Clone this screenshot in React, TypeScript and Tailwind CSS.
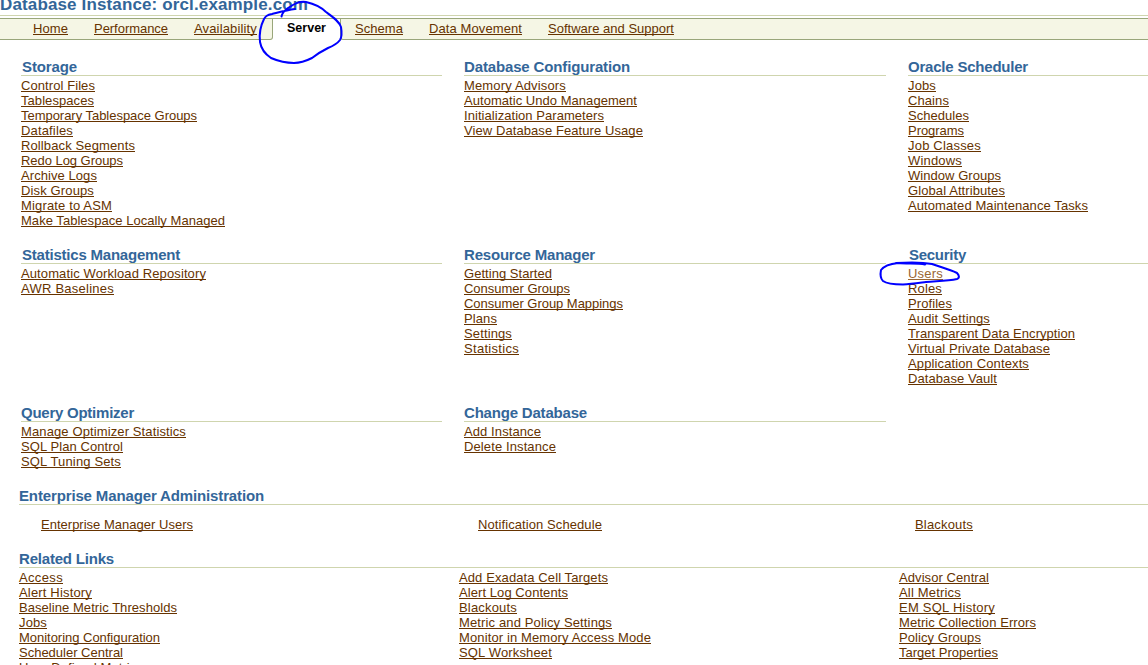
type Link = [label: string, width: number];

const storage: Link[] = [
  ['Control Files', 74], ['Tablespaces', 73], ['Temporary Tablespace Groups', 176], ['Datafiles', 52],
  ['Rollback Segments', 114], ['Redo Log Groups', 102], ['Archive Logs', 76], ['Disk Groups', 73],
  ['Migrate to ASM', 91], ['Make Tablespace Locally Managed', 204],
];
const configuration: Link[] = [
  ['Memory Advisors', 102], ['Automatic Undo Management', 173], ['Initialization Parameters', 140],
  ['View Database Feature Usage', 179],
];
const scheduler: Link[] = [
  ['Jobs', 28], ['Chains', 41], ['Schedules', 61], ['Programs', 56], ['Job Classes', 73], ['Windows', 54],
  ['Window Groups', 93], ['Global Attributes', 97], ['Automated Maintenance Tasks', 180],
];
const statistics: Link[] = [['Automatic Workload Repository', 185], ['AWR Baselines', 93]];
const resources: Link[] = [
  ['Getting Started', 88], ['Consumer Groups', 106], ['Consumer Group Mappings', 159], ['Plans', 33],
  ['Settings', 48], ['Statistics', 55],
];
const security: Link[] = [
  ['Users', 35], ['Roles', 34], ['Profiles', 44], ['Audit Settings', 82], ['Transparent Data Encryption', 167],
  ['Virtual Private Database', 142], ['Application Contexts', 121], ['Database Vault', 89],
];
const optimizer: Link[] = [['Manage Optimizer Statistics', 165], ['SQL Plan Control', 102], ['SQL Tuning Sets', 100]];
const change: Link[] = [['Add Instance', 77], ['Delete Instance', 92]];
const related: Link[][] = [
  [['Access', 44], ['Alert History', 73], ['Baseline Metric Thresholds', 158], ['Jobs', 28],
    ['Monitoring Configuration', 141], ['Scheduler Central', 104], ['User-Defined Metrics', 124]],
  [['Add Exadata Cell Targets', 149], ['Alert Log Contents', 109], ['Blackouts', 58],
    ['Metric and Policy Settings', 153], ['Monitor in Memory Access Mode', 192], ['SQL Worksheet', 93]],
  [['Advisor Central', 90], ['All Metrics', 62], ['EM SQL History', 96], ['Metric Collection Errors', 137],
    ['Policy Groups', 82], ['Target Properties', 99]],
];

function FitText({ text, width }: { text: string; width: number }) {
  return (
    <span
      className="block whitespace-nowrap"
      ref={(el) => {
        if (!el) return;
        el.style.width = 'max-content';
        el.style.letterSpacing = '0px';
        const natural = el.getBoundingClientRect().width;
        el.style.letterSpacing = `${(width - natural) / text.length}px`;
        el.style.width = `${width}px`;
      }}
    >
      {text}
    </span>
  );
}

function A({ link, muted = false }: { link: Link; muted?: boolean }) {
  return (
    <a
      className={`block w-fit text-[13px] leading-[15px] underline decoration-1 underline-offset-1 [text-decoration-skip-ink:none] ${
        muted ? 'text-[#996633]' : 'text-[#663300]'
      }`}
    >
      <FitText text={link[0]} width={link[1]} />
    </a>
  );
}

function Heading({ title, width }: { title: string; width: number }) {
  return (
    <h2
      className={`h-[18px] border-b border-[#cfd5ae] text-[15px] leading-[17px] font-bold text-[#336699] ${
        title.startsWith('S') ? 'pl-px' : ''
      }`}
    >
      <FitText text={title} width={width} />
    </h2>
  );
}

function Section({ title, width, links }: { title: string; width: number; links: Link[] }) {
  return (
    <section>
      <Heading title={title} width={width} />
      <div className="pt-[2px]">
        {links.map((l) => <A key={l[0]} link={l} muted={l[0] === 'Users'} />)}
      </div>
    </section>
  );
}

export default function App() {
  return (
    <div className="relative h-[665px] w-[1148px] overflow-hidden bg-white font-['Liberation_Sans',Arial,sans-serif]">
      <header className="flex h-4 items-end border-b border-[#cfd5ae]">
        <h1 className="h-5 text-[17px] leading-5 font-bold text-[#336699]">
          <FitText text="Database Instance: orcl.example.com" width={308} />
        </h1>
      </header>
      <nav className="mt-[2px] flex h-[22px]">
        <div className="flex w-[273px] gap-[26px] rounded-br-[3px] border-y border-r border-[#99a67a] bg-[#f5f6e5] pt-[2px] pl-[33px]">
          <A link={['Home', 35]} />
          <A link={['Performance', 74]} />
          <A link={['Availability', 63]} />
        </div>
        <div className="w-[67px] border-t border-[#99a67a] pt-[2px] pl-[14px] text-[12.5px] leading-[15px] font-bold text-black">
          <FitText text="Server" width={39} />
        </div>
        <div className="flex flex-1 gap-[26px] rounded-bl-[3px] border-y border-l border-[#99a67a] bg-[#f5f6e5] pt-[2px] pl-[14px]">
          <A link={['Schema', 48]} />
          <A link={['Data Movement', 93]} />
          <A link={['Software and Support', 126]} />
        </div>
      </nav>
      <main>
        <div className="grid grid-cols-[421px_422px_240px] grid-rows-[188px_158px_83px] gap-x-[22px] pt-[18px] pl-[21px]">
          <Section title="Storage" width={55} links={storage} />
          <Section title="Database Configuration" width={166} links={configuration} />
          <Section title="Oracle Scheduler" width={120} links={scheduler} />
          <Section title="Statistics Management" width={158} links={statistics} />
          <Section title="Resource Manager" width={131} links={resources} />
          <Section title="Security" width={57} links={security} />
          <Section title="Query Optimizer" width={113} links={optimizer} />
          <Section title="Change Database" width={123} links={change} />
        </div>
        <section className="h-[63px] pl-[19px]">
          <Heading title="Enterprise Manager Administration" width={245} />
          <div className="grid grid-cols-[437px_437px_1fr] pt-[12px] pl-[22px]">
            <A link={['Enterprise Manager Users', 152]} />
            <A link={['Notification Schedule', 124]} />
            <A link={['Blackouts', 58]} />
          </div>
        </section>
        <section className="pl-[19px]">
          <Heading title="Related Links" width={95} />
          <div className="grid grid-cols-[440px_440px_1fr] pt-[2px]">
            {related.map((links, i) => (
              <div key={i}>{links.map((l) => <A key={l[0]} link={l} />)}</div>
            ))}
          </div>
        </section>
      </main>
      <svg className="pointer-events-none absolute inset-0" width="1148" height="665" fill="none" stroke="#0000ff" strokeWidth="2" strokeLinecap="round" strokeLinejoin="round">
        <path d="M281.500 16.500C282 13 284 11 288 8C294 4 299 1 306 2C315 4 321 7 326 12C333 17 339 21 341 27C342 33 342 37 340 40C337 44 333 46 328 48C322 51 317 54 312 58C306 61 301 63 294 63C286 63 278 61 271 58C265 54 261 48 260 42C259 34 261 25 264 19C266 16 267 15 272 14C280 12 287 10 295 9" />
        <path d="M925 264.500C917 263 907 264 898 263C889 264 884 266 881 270C880 275 881 279 883 281C887 284 895 284.500 903 284.500C911 284 918 283 926 282C938 281 948 281 957 279C960 278 959 275 957 273C949 269 940 267 932 264C922 262 911 262 896 263" />
      </svg>
    </div>
  );
}
